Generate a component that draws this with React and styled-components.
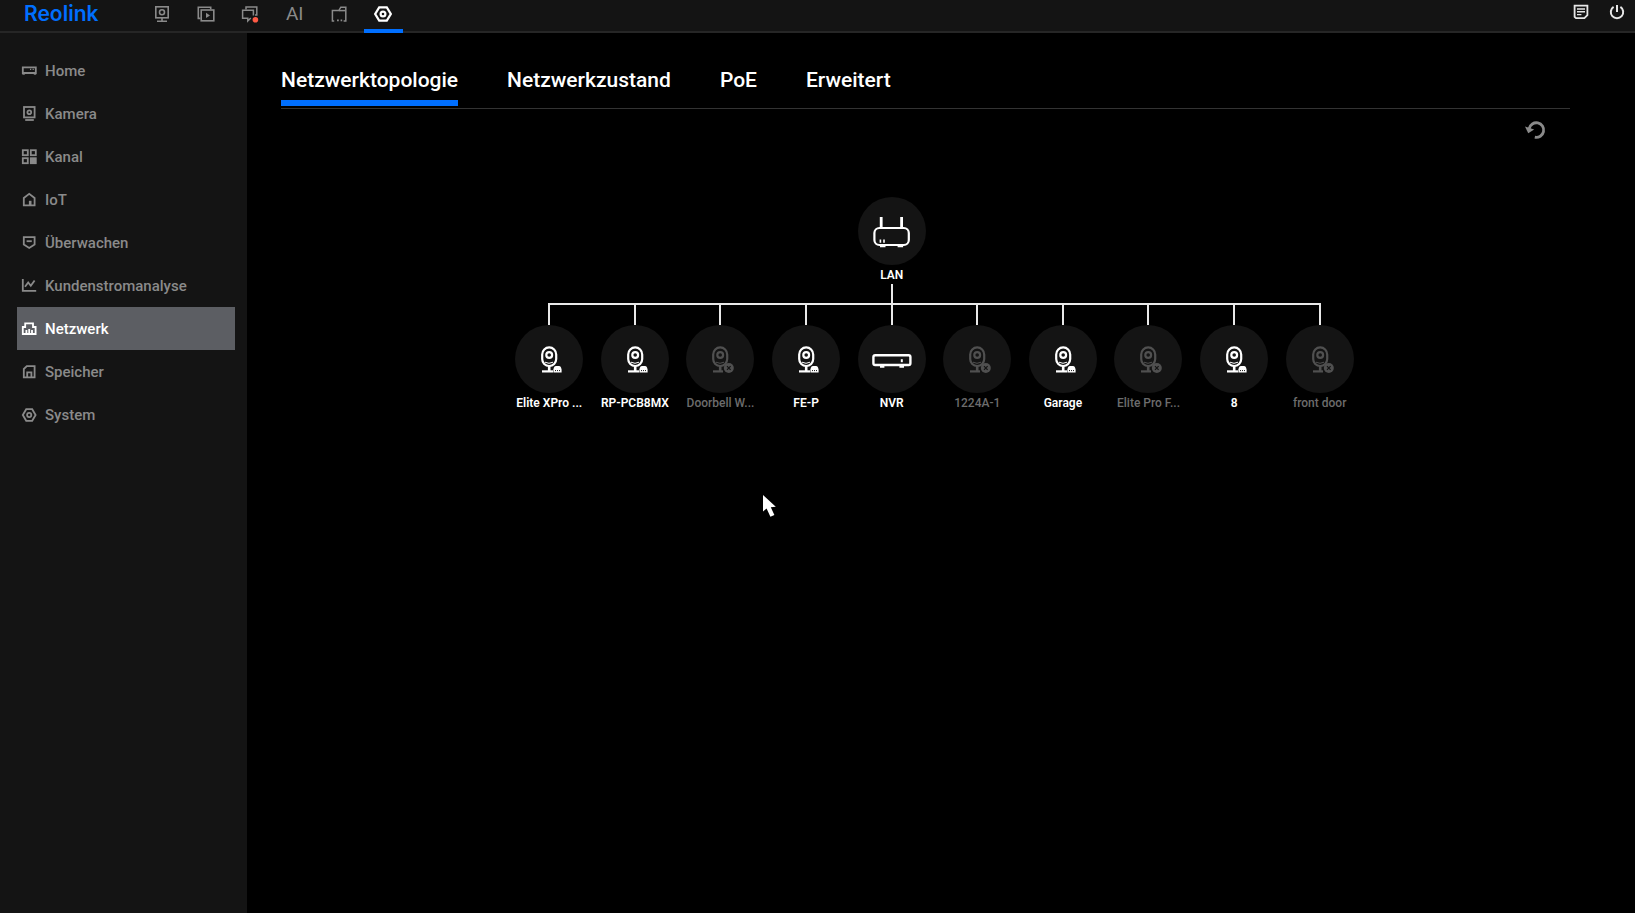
import React, { useState } from "react";
import styled, { createGlobalStyle } from "styled-components";

const menuItems = [
  { id: "home", label: "Home" },
  { id: "camera", label: "Kamera" },
  { id: "channel", label: "Kanal" },
  { id: "iot", label: "IoT" },
  { id: "shield", label: "Überwachen" },
  { id: "chart", label: "Kundenstromanalyse" },
  { id: "network", label: "Netzwerk" },
  { id: "storage", label: "Speicher" },
  { id: "system", label: "System" },
];

const tabs = ["Netzwerktopologie", "Netzwerkzustand", "PoE", "Erweitert"];

const devices = [
  { name: "Elite XPro ...", type: "camera", online: true },
  { name: "RP-PCB8MX", type: "camera", online: true },
  { name: "Doorbell W...", type: "camera", online: false },
  { name: "FE-P", type: "camera", online: true },
  { name: "NVR", type: "nvr", online: true },
  { name: "1224A-1", type: "camera", online: false },
  { name: "Garage", type: "camera", online: true },
  { name: "Elite Pro F...", type: "camera", online: false },
  { name: "8", type: "camera", online: true },
  { name: "front door", type: "camera", online: false },
];

const menuIcons = {
  home: (
    <>
      <path d="M1.8 4.4h13v5.6h-13z" />
      <path d="M1.4 11.2h2.4M12.8 11.2h2.4" strokeWidth="1" />
      <path d="M9 6.4h1.2M11.6 6.4h1.2" strokeWidth="1.2" />
    </>
  ),
  camera: (
    <>
      <rect x="3" y="1" width="10.6" height="10.4" />
      <circle cx="8.3" cy="6.2" r="1.9" />
      <path d="M4.2 14h8.6" />
    </>
  ),
  channel: (
    <>
      <rect x="1.8" y="1.2" width="5" height="5" />
      <rect x="9.8" y="1.2" width="5" height="5" />
      <rect x="1.8" y="9.2" width="5" height="5" />
      <rect x="9.8" y="9.2" width="5" height="5" fill="currentColor" />
    </>
  ),
  iot: (
    <>
      <path d="M2.8 13.3V6l5.4-4.2L13.6 6v7.3z" />
      <path d="M9.2 13V8.8" strokeWidth="2.6" />
    </>
  ),
  shield: (
    <>
      <path d="M2.8 2.2h10.8v7.2L8.2 13 2.8 9.4z" />
      <path d="M5.6 6.2h5.2" />
    </>
  ),
  chart: <path d="M1.8 1v11.8h13.4M4 8.8l3.2-4.4 2.6 3.4 3.8-5.4" />,
  network: (
    <>
      <path d="M1.8 13V6h2.4V2.4h7.8V6h2.6v7z" />
      <path d="M5.4 13V9M8.2 13V8M11 13V9" />
    </>
  ),
  storage: (
    <>
      <path d="M2.8 13.3V5l3-2.8h7.8v11.1z" />
      <path d="M6.2 13V8.4h4.2V13" />
    </>
  ),
  system: (
    <>
      <path d="M5.2 2.2h6L14.6 8l-3.4 5.8h-6L1.8 8z" />
      <circle cx="8.2" cy="8" r="2.1" />
    </>
  ),
};

const MenuIcon = ({ id }) => (
  <Icon width="16" height="16" viewBox="0 0 16 16" strokeWidth="1.8">
    {menuIcons[id]}
  </Icon>
);

const CameraIcon = ({ online }) => (
  <Icon width="28" height="32" viewBox="0 0 28 32" strokeWidth="2.2">
    <rect x="7.2" y="4.4" width="14" height="18.6" rx="7" />
    <circle cx="14.2" cy="12" r="2.9" />
    <path d="M10 19.2q4 2.2 8 0" strokeWidth="1" />
    <path d="M14.2 23v5" strokeWidth="2.6" />
    {online ? (
      <>
        <path d="M7 28.4h11" />
        <path
          d="M18.4 29.5v-3q.6-3.4 2.6-3.4h3q2 0 2.6 3.4v3z"
          fill="currentColor"
          stroke="none"
        />
        <path d="M20 27.6h1M22 27.6h1M24 27.6h1" stroke="#141414" strokeWidth="1" />
      </>
    ) : (
      <>
        <path d="M7 28.4h10" />
        <circle cx="22.8" cy="25" r="5" fill="currentColor" stroke="none" />
        <path
          d="M21 23.2l3.6 3.6M24.6 23.2L21 26.8"
          stroke="#141414"
          strokeWidth="1.2"
        />
      </>
    )}
  </Icon>
);

const NvrIcon = () => (
  <Icon width="40" height="20" viewBox="0 0 40 20" strokeWidth="2.4">
    <rect x="1.4" y="6.2" width="37" height="9.8" rx="1.8" />
    <path d="M8 17.6h4.4M27.4 17.6h4.6" />
    <path d="M29.8 10.2v3" strokeWidth="2" />
  </Icon>
);

const RouterIcon = () => (
  <Icon width="40" height="34" viewBox="0 0 40 34" strokeWidth="2.2">
    <path d="M9.2 3v10M29.6 3v10" strokeWidth="2.8" />
    <rect x="2.4" y="14" width="34.4" height="17" rx="5" />
    <path d="M8 32.2h5.5M25.6 32.2h5.5" />
    <path d="M8.4 25.4v3.4M12 25.4v3.4" strokeWidth="1.6" />
  </Icon>
);

function Device({ device, first, last }) {
  return (
    <Node>
      <Branch>
        <Rail $hidden={first} />
        <Drop />
        <Rail $hidden={last} />
      </Branch>
      <Disc $offline={!device.online}>
        {device.type === "nvr" ? (
          <NvrIcon />
        ) : (
          <CameraIcon online={device.online} />
        )}
      </Disc>
      <NodeLabel $offline={!device.online}>{device.name}</NodeLabel>
    </Node>
  );
}

function App() {
  const [activeMenu, setActiveMenu] = useState("network");
  const [activeTab, setActiveTab] = useState("Netzwerktopologie");

  return (
    <Page>
      <GlobalStyle />
      <Header>
        <Logo>Reolink</Logo>
        <Modes>
          <Mode aria-label="Live">
            <Icon width="18" height="18" viewBox="0 0 18 18" strokeWidth="1.6">
              <rect x="2.8" y="1.8" width="12.4" height="11" />
              <circle cx="9" cy="7.3" r="2.5" />
              <path d="M9 13v3M4 16.2h10" />
            </Icon>
          </Mode>
          <Mode aria-label="Wiedergabe">
            <Icon width="18" height="18" viewBox="0 0 18 18" strokeWidth="1.6">
              <path d="M3.4 13.4H1.3V2.2h12.4v2" />
              <rect x="4.2" y="5" width="12.6" height="10.8" />
              <path d="M9 7.8v5.2l4-2.6z" fill="currentColor" stroke="none" />
            </Icon>
          </Mode>
          <Mode aria-label="Nachrichten">
            <Icon width="18" height="18" viewBox="0 0 18 18" strokeWidth="1.5">
              <path d="M5 4.4V2h10.8v8H14" />
              <path d="M9.8 13L6.8 16v-2.8H1.6V5.2h10.8v5.2" />
              <circle cx="14.4" cy="14.8" r="2.8" fill="#ff5a45" stroke="none" />
            </Icon>
          </Mode>
          <Mode aria-label="AI">AI</Mode>
          <Mode aria-label="Dateien">
            <Icon width="18" height="18" viewBox="0 0 18 18" strokeWidth="1.5">
              <path d="M4.2 16H2.4V5.6h6.4l2-3.4h5V16h-2.2" />
              <path d="M9 5.6h6.4" />
              <path d="M7 15.4h1.8M10.6 15.4h1.6" strokeWidth="1.8" />
            </Icon>
          </Mode>
          <Mode aria-label="Einstellungen" $active>
            <Icon width="18" height="18" viewBox="0 0 18 18" strokeWidth="2.2">
              <path d="M5.2 2.4h7.6L16.8 9l-4 6.6H5.2L1.2 9z" />
              <circle cx="9" cy="9" r="2.4" />
            </Icon>
          </Mode>
        </Modes>
        <HeaderActions>
          <IconButton aria-label="Protokoll">
            <Icon width="16" height="16" viewBox="0 0 16 16" strokeWidth="1.8">
              <path d="M1.6 1.6h12.8v9.6l-3 3H3l-1.4-1.4z" />
              <path d="M4 5h8M4 7.8h8M4 10.6h4.4" strokeWidth="1.4" />
            </Icon>
          </IconButton>
          <IconButton aria-label="Ausschalten">
            <Icon width="16" height="16" viewBox="0 0 16 16" strokeWidth="2">
              <path d="M4.6 2.9a6.2 6.2 0 1 0 6.8 0M8 1v7" />
            </Icon>
          </IconButton>
        </HeaderActions>
      </Header>
      <Body>
        <Sidebar>
          {menuItems.map((item) => (
            <MenuItem
              key={item.id}
              $active={item.id === activeMenu}
              onClick={() => setActiveMenu(item.id)}
            >
              <MenuIcon id={item.id} />
              {item.label}
            </MenuItem>
          ))}
        </Sidebar>
        <Main>
          <TabBar>
            {tabs.map((tab) => (
              <Tab
                key={tab}
                $active={tab === activeTab}
                onClick={() => setActiveTab(tab)}
              >
                {tab}
              </Tab>
            ))}
          </TabBar>
          <Toolbar>
            <IconButton aria-label="Aktualisieren" $muted>
              <Icon width="22" height="20" viewBox="0 0 22 20" strokeWidth="2.8">
                <path d="M5.2 8.6a7.3 7.3 0 1 1 5.6 8.6" />
                <path
                  d="M1 6.4l3.2 6.8 6-3.6z"
                  fill="currentColor"
                  stroke="none"
                />
              </Icon>
            </IconButton>
          </Toolbar>
          <Topology>
            <Root>
              <Disc>
                <RouterIcon />
              </Disc>
              <NodeLabel>LAN</NodeLabel>
              <Stem />
            </Root>
            {devices.map((device, i) => (
              <Device
                key={device.name}
                device={device}
                first={i === 0}
                last={i === devices.length - 1}
              />
            ))}
          </Topology>
        </Main>
      </Body>
      <Pointer width="16" height="24" viewBox="0 0 16 24">
        <path d="M1 1v16.5l3.6-3 3.8 8.2 4-1.8-3.6-7.6 5-.6z" fill="#fff" />
      </Pointer>
    </Page>
  );
}

export default App;

const GlobalStyle = createGlobalStyle`
* {
  box-sizing: border-box;
}
body {
  margin: 0;
  background: #000;
  font-family: Roboto, "Liberation Sans", sans-serif;
}
button {
  border: none;
  padding: 0;
  background: none;
  font-family: inherit;
  cursor: pointer;
}
`;

const Icon = styled.svg`
display: block;
flex-shrink: 0;
fill: none;
stroke: currentColor;
`;

const Page = styled.div`
display: flex;
flex-direction: column;
min-height: 100vh;
`;

const Header = styled.header`
display: flex;
height: 33px;
padding: 0 10px 0 24px;
background: #141414;
border-bottom: 2px solid #262626;
`;

const Logo = styled.div`
width: 118px;
color: #006fff;
font-family: Inter, sans-serif;
font-size: 21px;
font-weight: 600;
line-height: 28px;
`;

const Modes = styled.nav`
display: flex;
justify-content: space-between;
width: 261px;
height: 33px;
`;

const Mode = styled.button`
display: flex;
justify-content: center;
align-items: center;
width: 39px;
height: 33px;
padding-bottom: 2px;
border-bottom: 4px solid ${(props) => (props.$active ? "#006fff" : "transparent")};
color: ${(props) => (props.$active ? "#fff" : "#8a8a8a")};
font-size: 19px;
`;

const HeaderActions = styled.div`
display: flex;
align-items: center;
gap: 20px;
margin-left: auto;
padding-bottom: 8px;
`;

const IconButton = styled.button`
color: ${(props) => (props.$muted ? "#8a8a8a" : "#e6e6e6")};
`;

const Body = styled.div`
display: flex;
flex: 1;
`;

const Sidebar = styled.nav`
display: flex;
flex-direction: column;
width: 247px;
padding: 16px 12px 0 17px;
background: #141414;
`;

const MenuItem = styled.button`
display: flex;
align-items: center;
gap: 8px;
height: 43px;
padding-left: 4px;
background: ${(props) => (props.$active ? "#5c5e63" : "transparent")};
color: ${(props) => (props.$active ? "#fff" : "#8a8a8a")};
font-size: 15px;
font-weight: 500;
`;

const Main = styled.main`
flex: 1;
padding: 28px 65px 0 34px;
`;

const TabBar = styled.div`
display: flex;
gap: 49px;
padding-bottom: 2px;
border-bottom: 1px solid #333;
`;

const Tab = styled.button`
height: 45px;
padding-bottom: 2px;
border-bottom: 6px solid ${(props) => (props.$active ? "#006fff" : "transparent")};
color: #fff;
font-size: 21px;
font-weight: 500;
`;

const Toolbar = styled.div`
display: flex;
justify-content: flex-end;
padding: 11px 24px 0 0;
`;

const Topology = styled.div`
display: grid;
grid-template-columns: repeat(10, 1fr);
width: 874px;
margin: 57px auto 0;
padding-left: 18px;
`;

const Root = styled.div`
grid-column: 5;
display: flex;
flex-direction: column;
align-items: center;
`;

const Node = styled.div`
grid-row: 2;
display: flex;
flex-direction: column;
align-items: center;
`;

const Disc = styled.div`
display: flex;
justify-content: center;
align-items: center;
width: 68px;
height: 68px;
border-radius: 50%;
background: #141414;
color: ${(props) => (props.$offline ? "#505050" : "#fff")};
`;

const NodeLabel = styled.div`
margin-top: 1px;
color: ${(props) => (props.$offline ? "#6c6c6c" : "#fff")};
font-size: 12px;
font-weight: ${(props) => (props.$offline ? 500 : 600)};
line-height: 18px;
white-space: nowrap;
`;

const Stem = styled.div`
width: 2px;
height: 19px;
background: #e8e8e8;
`;

const Branch = styled.div`
display: grid;
grid-template-columns: 1fr 2px 1fr;
width: 100%;
height: 22px;
`;

const Rail = styled.div`
height: 2px;
background: ${(props) => (props.$hidden ? "transparent" : "#e8e8e8")};
`;

const Drop = styled.div`
background: #e8e8e8;
`;

const Pointer = styled.svg`
position: absolute;
left: 762px;
top: 494px;
`;
